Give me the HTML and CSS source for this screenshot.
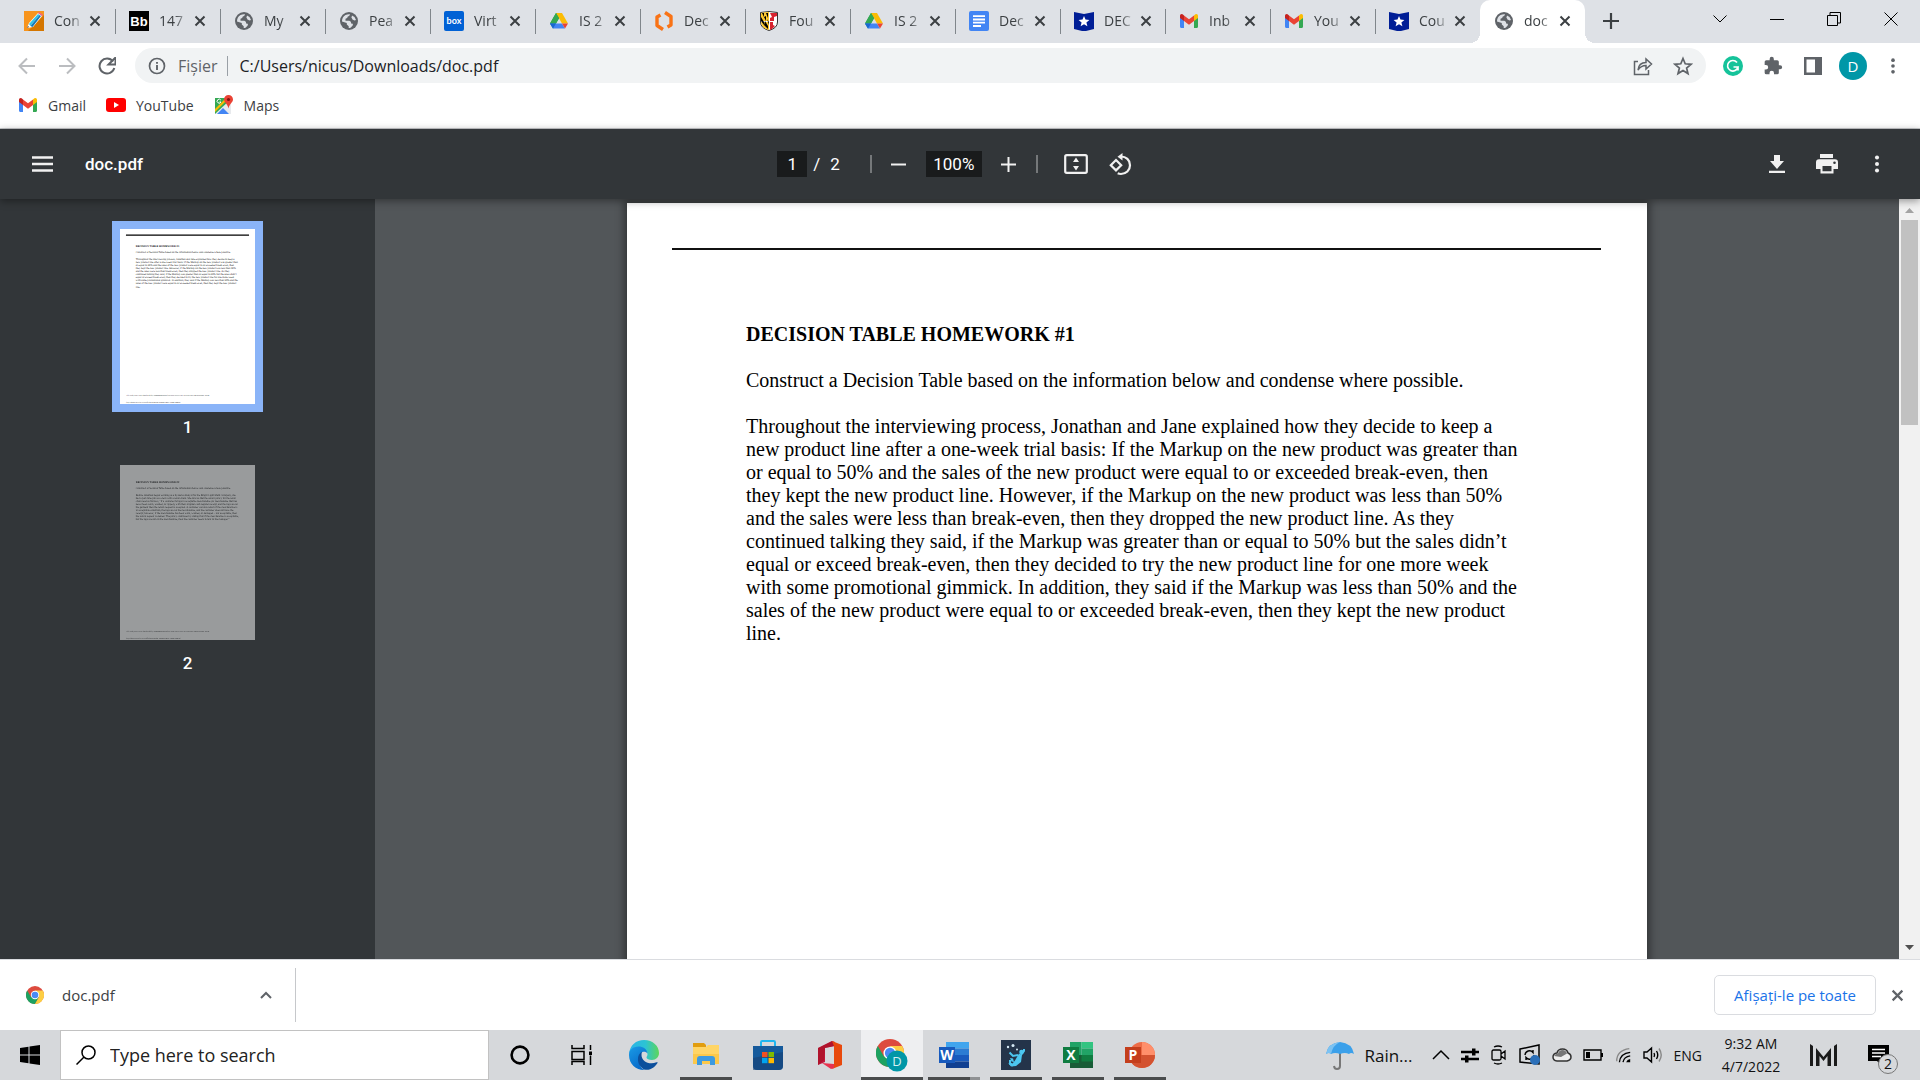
FILE: index.html
```html
<!DOCTYPE html>
<html lang="ro">
<head>
    <meta charset="UTF-8">
    <meta name="viewport" content="width=device-width, initial-scale=1.0">
    <title>doc.pdf</title>
    <link rel="stylesheet" href="styles.css">
</head>
<body>
    <!-- Shared icons -->
    <svg class="defs" aria-hidden="true">
        <symbol id="i-x" viewBox="0 0 12 12"><path d="M1.5 1.5l9 9M10.5 1.5l-9 9" fill="none" stroke="currentColor" stroke-width="2"/></symbol>
        <symbol id="i-globe" viewBox="0 0 20 20"><circle cx="10" cy="10" r="9" fill="#5f6368"/><path d="M3 10c0-2 1-4.500 3.500-6 1.500-.7 3-1 4.500-.8-.2 1.300-1 2-2.200 2.300-.3 1.500-1.300 2-2.300 2.300v1.900h3.800c1.500.4 1.800 1.500 1.800 2.700l1.600.4c.6 1-.1 2.200-1 2.800-.6 1-1.700 1.500-3 1.500v-1.800L7.800 13.500V12L3 10.500z" fill="#dee1e6"/><path d="M13 4.500l2.500 1.500 1.500 3-1.500.5-2-1-1-2z" fill="#dee1e6"/></symbol>
        <symbol id="i-drive" viewBox="0 0 20 20"><path d="M7 2h6l-3 5.200L4 17.500 1 12.400z" fill="#1ea446"/><path d="M7 2h6l6 10.400h-6z" fill="#fbbc04"/><path d="M7 2l3 5.200L7 12.400H1z" fill="#34a853"/><path d="M7 12.400h6l3 5.200H4l-3-5.200z" fill="#4285f4"/><path d="M4 17.600L1 12.400h6z" fill="#1967d2"/><path d="M13 12.400h6l-3 5.200z" fill="#ea4335"/></symbol>
        <symbol id="i-gmail" viewBox="0 0 20 20"><path d="M1 5v10.500c0 .8.500 1.500 1.500 1.500H5V8z" fill="#4285f4"/><path d="M19 5v10.500c0 .8-.5 1.500-1.500 1.500H15V8z" fill="#34a853"/><path d="M5 4.500v5.500L1 7V5c0-2 2-2.600 3.500-1z" fill="#c5221f"/><path d="M15 4.500v5.500l4-3V5c0-2-2-2.600-3.500-1z" fill="#fbbc04"/><path d="M5 4.500l5 3.700 5-3.700V10l-5 3.700L5 10z" fill="#ea4335"/></symbol>
        <symbol id="i-star-badge" viewBox="0 0 20 20"><path d="M0 1l10 2 10-2v17l-10 2.500L0 18z" fill="#001e96"/><path d="M10 5l1.500 3.600 3.900.3-3 2.500 1 3.800-3.400-2-3.400 2 1-3.800-3-2.500 3.900-.3z" fill="#fff"/></symbol>
        <symbol id="i-chrome" viewBox="0 0 24 24"><circle cx="12" cy="12" r="12" fill="#dd4b3e"/><path d="M1.600 6A12 12 0 0 0 12 24l5.200-9.100L6.800 14.900z" fill="#1da261"/><path d="M12 24A12 12 0 0 0 22.400 6H12l5.200 9z" fill="#fdce43"/><circle cx="12" cy="12" r="5.600" fill="#fff"/><circle cx="12" cy="12" r="4.400" fill="#4a8af4"/></symbol>
        <symbol id="i-dots" viewBox="0 0 24 24"><circle cx="12" cy="5" r="2.200"/><circle cx="12" cy="12" r="2.200"/><circle cx="12" cy="19" r="2.200"/></symbol>
    </svg>

    <header class="tab-strip">
        <nav class="tabs">
            <button class="tab">
                <svg class="fav" viewBox="0 0 20 20"><path d="M0 0h20v20H0z" fill="#f7941d"/><path d="M20 4v16H4z" fill="#d47600"/><path d="M3 17l2-5L14 2l4 3-9 11z" fill="#fff"/><path d="M5 13L14 3l1.500 1-9 11z" fill="#2fc3e8"/><path d="M6.500 15l9-11 1.500 1-8.500 11z" fill="#1579b8"/><path d="M3 17l1-2 1 1z" fill="#333"/><path d="M14 2l1-1 4 3-1 1z" fill="#ef6191"/></svg>
                <span>Con</span><svg class="close"><use href="#i-x"/></svg>
            </button>
            <button class="tab">
                <svg class="fav" viewBox="0 0 20 20"><path d="M0 0h20v20H0z"/><text x="10" y="15" text-anchor="middle" class="bb">Bb</text></svg>
                <span>147</span><svg class="close"><use href="#i-x"/></svg>
            </button>
            <button class="tab"><svg class="fav"><use href="#i-globe"/></svg><span>My</span><svg class="close"><use href="#i-x"/></svg></button>
            <button class="tab"><svg class="fav"><use href="#i-globe"/></svg><span>Pea</span><svg class="close"><use href="#i-x"/></svg></button>
            <button class="tab">
                <svg class="fav" viewBox="0 0 20 20"><rect width="20" height="20" rx="2" fill="#0061d5"/><text x="10" y="13" text-anchor="middle" class="box">box</text></svg>
                <span>Virt</span><svg class="close"><use href="#i-x"/></svg>
            </button>
            <button class="tab"><svg class="fav"><use href="#i-drive"/></svg><span>IS 2</span><svg class="close"><use href="#i-x"/></svg></button>
            <button class="tab">
                <svg class="fav" viewBox="0 0 20 20"><path d="M6.500 4L3 6v8.500L9 18.500M13.500 16l3.500-2V5.500L11 1.500" fill="none" stroke="#f97316" stroke-width="3.400" stroke-linejoin="round"/></svg>
                <span>Dec</span><svg class="close"><use href="#i-x"/></svg>
            </button>
            <button class="tab">
                <svg class="fav" viewBox="0 0 20 20"><path d="M1.500 1.500Q10-.5 18.500 1.500V11q0 6-8.500 8.500Q1.500 17 1.500 11z" fill="#fff" stroke="#333"/><path d="M2 2q4-1 8-1v9H2z" fill="#fdc82f"/><path d="M2 11h8v8q-8-2-8-8z" fill="#fdc82f"/><path d="M3 2l2 4V2zM5 6l2 4V5zM7 2l2 5V2zM2 6l3 5v3L2 10zM6 10l3 5v3l-4-4zM8 8l2 3v3z"/><path d="M11 2h7v3l-3 1v4h-4V7l2-1zM11 11h3v3l2 1-3 3-2 1z" fill="#d8232f"/></svg>
                <span>Fou</span><svg class="close"><use href="#i-x"/></svg>
            </button>
            <button class="tab"><svg class="fav"><use href="#i-drive"/></svg><span>IS 2</span><svg class="close"><use href="#i-x"/></svg></button>
            <button class="tab">
                <svg class="fav" viewBox="0 0 20 20"><rect width="20" height="20" rx="2" fill="#4285f4"/><path d="M4 5.200h12M4 8.500h12M4 11.700h12M4 15h8" stroke="#fff" stroke-width="1.800"/></svg>
                <span>Dec</span><svg class="close"><use href="#i-x"/></svg>
            </button>
            <button class="tab"><svg class="fav"><use href="#i-star-badge"/></svg><span>DEC</span><svg class="close"><use href="#i-x"/></svg></button>
            <button class="tab"><svg class="fav"><use href="#i-gmail"/></svg><span>Inb</span><svg class="close"><use href="#i-x"/></svg></button>
            <button class="tab"><svg class="fav"><use href="#i-gmail"/></svg><span>You</span><svg class="close"><use href="#i-x"/></svg></button>
            <button class="tab"><svg class="fav"><use href="#i-star-badge"/></svg><span>Cou</span><svg class="close"><use href="#i-x"/></svg></button>
            <button class="tab active"><svg class="fav"><use href="#i-globe"/></svg><span>doc</span><svg class="close"><use href="#i-x"/></svg></button>
        </nav>
        <button class="new-tab" aria-label="New tab"><svg width="16" height="16" viewBox="0 0 16 16"><path d="M8 0v16M0 8h16" stroke="#3c4043" stroke-width="2.200"/></svg></button>
        <div class="window-buttons">
            <button aria-label="Tabs"><svg width="14" height="14" viewBox="0 0 14 14"><path d="M.5 3.500L7 10l6.500-6.500"/></svg></button>
            <button aria-label="Minimize"><svg width="14" height="14" viewBox="0 0 14 14"><path d="M0 7.500h14"/></svg></button>
            <button aria-label="Restore"><svg width="14" height="14" viewBox="0 0 14 14"><path d="M.5 3.500h10v10H.5zM3 3.500v-3h10.500V11H10.500"/></svg></button>
            <button aria-label="Close"><svg width="14" height="14" viewBox="0 0 14 14"><path d="M.5.5l13 13M13.500.5l-13 13"/></svg></button>
        </div>
    </header>

    <div class="address-row">
        <button class="nav off" aria-label="Back"><svg width="18" height="18" viewBox="0 0 18 18"><path d="M17 9H2M9 1.500L1.500 9 9 16.500"/></svg></button>
        <button class="nav off" aria-label="Forward"><svg width="18" height="18" viewBox="0 0 18 18"><path d="M1 9h15M9 1.500L16.500 9 9 16.500"/></svg></button>
        <button class="nav" aria-label="Reload"><svg width="18" height="18" viewBox="0 0 18 18"><path d="M15 4.500A7.500 7.500 0 1 0 16.300 11"/><path d="M17.500.5v7h-7z" fill="#5f6368" stroke="none"/></svg></button>
        <div class="omnibox">
            <svg width="18" height="18" viewBox="0 0 18 18"><circle cx="9" cy="9" r="7.500" fill="none" stroke="#5f6368" stroke-width="1.700"/><path d="M9 8v5M9 5v1.800" stroke="#5f6368" stroke-width="1.900"/></svg>
            <label for="url">Fișier</label>
            <input id="url" type="text" value="C:/Users/nicus/Downloads/doc.pdf">
            <button aria-label="Share"><svg width="20" height="20" viewBox="0 0 20 20"><path d="M5 5.500H1.500v13h14V14M5 14c.5-5 3-7.500 8-7.500V3l5.500 5-5.500 5V9.500c-4 0-6 1.500-8 4.500z" fill="none" stroke="#5f6368" stroke-width="1.500"/></svg></button>
            <button aria-label="Bookmark"><svg width="20" height="20" viewBox="0 0 20 20"><path d="M10 2.500l2.200 5.300 5.800.5-4.400 3.700 1.400 5.600-5-3-5 3 1.400-5.600L2 8.300l5.800-.5z" fill="none" stroke="#5f6368" stroke-width="1.700"/></svg></button>
        </div>
        <div class="extensions">
            <button aria-label="Grammarly"><svg width="20" height="20" viewBox="0 0 20 20"><circle cx="10" cy="10" r="10" fill="#15c39a"/><path d="M14 6.500A5.300 5.300 0 1 0 15 11h-4.500M15 11v3.500" fill="none" stroke="#fff" stroke-width="1.700"/></svg></button>
            <button aria-label="Extensions"><svg width="20" height="20" viewBox="0 0 24 24"><path d="M20.500 11H19V7a2 2 0 0 0-2-2h-4V3.500a2.500 2.500 0 0 0-5 0V5H4a2 2 0 0 0-2 2v3.800h1.500a2.700 2.700 0 0 1 0 5.400H2V20a2 2 0 0 0 2 2h3.800v-1.500a2.700 2.700 0 0 1 5.400 0V22H17a2 2 0 0 0 2-2v-4h1.500a2.500 2.500 0 0 0 0-5z" fill="#5f6368"/></svg></button>
            <button aria-label="Side panel"><svg width="18" height="18" viewBox="0 0 18 18"><path d="M0 0h18v18H0zM2.500 2.500v13H11v-13z" fill="#5f6368" fill-rule="evenodd"/></svg></button>
            <button class="avatar" aria-label="Profile">D</button>
            <button aria-label="Menu"><svg width="20" height="20" fill="#5f6368"><use href="#i-dots"/></svg></button>
        </div>
    </div>

    <nav class="bookmarks">
        <a href="#"><svg width="20" height="20"><use href="#i-gmail"/></svg>Gmail</a>
        <a href="#"><svg width="20" height="20" viewBox="0 0 20 20"><rect y="3" width="20" height="14" rx="3" fill="#f00"/><path d="M8 7l5 3-5 3z" fill="#fff"/></svg>YouTube</a>
        <a href="#"><svg width="20" height="20" viewBox="0 0 20 20"><path d="M1 3h16v16H1z" fill="#34a853"/><path d="M1 19L17 4v15z" fill="#e8eaed"/><path d="M3 19l6-6 6 6z" fill="#4285f4"/><path d="M1 14L12 3h3L1 17z" fill="#fbbc04"/><path d="M6.800 5A2 2 0 1 0 7 7H5.500" fill="none" stroke="#fff"/><path d="M14.500 0a4.500 4.500 0 0 0-4.500 4.500c0 3 3.500 4 4.500 9 1-5 4.500-6 4.500-9A4.500 4.500 0 0 0 14.500 0z" fill="#ea4335"/><circle cx="14.500" cy="4.500" r="1.600" fill="#811411"/></svg>Maps</a>
    </nav>

    <div class="pdf-toolbar">
        <div class="pdf-left">
            <button aria-label="Menu"><svg width="21" height="16" viewBox="0 0 21 16"><path d="M0 1.500h21M0 8h21M0 14.500h21" stroke="#f1f1f1" stroke-width="2.500"/></svg></button>
            <span class="pdf-title">doc.pdf</span>
        </div>
        <div class="pdf-center">
            <input class="page-no" type="text" value="1" aria-label="Page">
            <span class="slash">/</span><span class="page-count">2</span>
            <i class="rule"></i>
            <button aria-label="Zoom out"><svg width="15" height="15" viewBox="0 0 15 15"><path d="M0 7.500h15" stroke="#f1f1f1" stroke-width="2"/></svg></button>
            <input class="zoom" type="text" value="100%" aria-label="Zoom">
            <button aria-label="Zoom in"><svg width="15" height="15" viewBox="0 0 15 15"><path d="M0 7.500h15M7.500 0v15" stroke="#f1f1f1" stroke-width="2"/></svg></button>
            <i class="rule"></i>
            <button class="fit" aria-label="Fit to page"><svg width="24" height="20" viewBox="0 0 24 20"><rect x="1.200" y="1.200" width="21.600" height="17.600" rx="1.500" fill="none" stroke="#f1f1f1" stroke-width="2.200"/><path d="M12 3.500L15 8H9zM12 16.500L15 12H9z" fill="#f1f1f1"/></svg></button>
            <button class="rotate" aria-label="Rotate"><svg width="23" height="23" viewBox="0 0 23 23"><path d="M7 7l5.200 5.200L7 17.400 1.800 12.200zM12 3.500c5 0 9 3.500 9 8.700s-4 8.800-9 8.800c-1.300 0-2.300-.2-3.300-.7" fill="none" stroke="#f1f1f1" stroke-width="2.200"/><path d="M13.500 0v7.500L8.500 3.700z" fill="#f1f1f1"/></svg></button>
        </div>
        <div class="pdf-right">
            <button aria-label="Download"><svg width="16" height="18" viewBox="0 0 16 18"><path d="M5 0h6v6h4l-7 8-7-8h4zM0 15.700h16V18H0z" fill="#f1f1f1"/></svg></button>
            <button aria-label="Print"><svg width="22" height="20" viewBox="0 0 22 20"><path d="M4 0h13v4H4zM3 5.200h16a3 3 0 0 1 3 3V15h-4.500v4.500h-13V15H0V8.200a3 3 0 0 1 3-3zM6.500 12v5.300h9V12zM18.500 7.500a1.300 1.300 0 1 0 0 2.600 1.300 1.300 0 0 0 0-2.600z" fill="#f1f1f1" fill-rule="evenodd"/></svg></button>
            <button aria-label="More"><svg width="22" height="22" fill="#f1f1f1"><use href="#i-dots"/></svg></button>
        </div>
    </div>

    <main class="viewer">
        <aside class="thumbs">
            <button class="thumb selected">
                <svg class="sheet" viewBox="0 0 1020 1322">
                    <path d="M45 46h930" stroke="#000" stroke-width="9"/>
                    <text x="119" y="137" font-weight="bold">DECISION TABLE HOMEWORK #1</text>
                    <text x="119" y="183">Construct a Decision Table based on the information below and condense where possible.</text>
                    <text>
                        <tspan x="119" y="235">Throughout the interviewing process, Jonathan and Jane explained how they decide to keep a</tspan>
                        <tspan x="119" dy="23">new product line after a one-week trial basis: If the Markup on the new product was greater than</tspan>
                        <tspan x="119" dy="23">or equal to 50% and the sales of the new product were equal to or exceeded break-even, then</tspan>
                        <tspan x="119" dy="23">they kept the new product line. However, if the Markup on the new product was less than 50%</tspan>
                        <tspan x="119" dy="23">and the sales were less than break-even, then they dropped the new product line. As they</tspan>
                        <tspan x="119" dy="23">continued talking they said, if the Markup was greater than or equal to 50% but the sales didn’t</tspan>
                        <tspan x="119" dy="23">equal or exceed break-even, then they decided to try the new product line for one more week</tspan>
                        <tspan x="119" dy="23">with some promotional gimmick. In addition, they said if the Markup was less than 50% and the</tspan>
                        <tspan x="119" dy="23">sales of the new product were equal to or exceeded break-even, then they kept the new product</tspan>
                        <tspan x="119" dy="23">line.</tspan>
                    </text>
                    <text class="foot" x="48" y="1262">This study source was downloaded by 100000838297040 from CourseHero.com on 04-07-2022 08:30:50 GMT -05:00</text>
                    <text class="foot" x="48" y="1315">https://www.coursehero.com/file/30750267/DECISION-TABLE-HOMEWORK/</text>
                </svg>
            </button>
            <span class="thumb-no">1</span>
            <button class="thumb dim">
                <svg class="sheet" viewBox="0 0 1020 1322">
                    <text x="119" y="137" font-weight="bold">DECISION TABLE HOMEWORK #2</text>
                    <text x="119" y="183">Construct a Decision Table based on the information below and condense where possible.</text>
                    <text>
                        <tspan x="119" y="235">Before Jonathan began working as a Systems Analyst for the Bright Light Math Company, she</tspan>
                        <tspan x="119" dy="23">had a part-time job as a clerk with a retail chain. She told us that the return policy for the retail</tspan>
                        <tspan x="119" dy="23">chain read as follows, “If a customer brings in acceptable merchandise (or merchandise that has</tspan>
                        <tspan x="119" dy="23">never been worn, washed, or ripped), with their original cash register receipt, and the tags are on</tspan>
                        <tspan x="119" dy="23">the garment then the return request is accepted. A customer can also return if the merchandise is</tspan>
                        <tspan x="119" dy="23">in acceptable condition, the tags are on the merchandise, and the customer does not have the</tspan>
                        <tspan x="119" dy="23">receipt; however, if the merchandise has been worn, washed, or damaged – not acceptable, then</tspan>
                        <tspan x="119" dy="23">the return request is denied. The policy continues by stating that if the merchandise is acceptable,</tspan>
                        <tspan x="119" dy="23">but the tags are not on the merchandise, then the customer needs to talk to the manager.”</tspan>
                    </text>
                    <text class="foot" x="48" y="1262">This study source was downloaded by 100000838297040 from CourseHero.com on 04-07-2022 08:30:50 GMT -05:00</text>
                    <text class="foot" x="48" y="1315">https://www.coursehero.com/file/30750267/DECISION-TABLE-HOMEWORK/</text>
                </svg>
            </button>
            <span class="thumb-no">2</span>
        </aside>
        <section class="pages">
            <article class="page">
                <hr>
                <h1>DECISION TABLE HOMEWORK #1</h1>
                <p>Construct a Decision Table based on the information below and condense where possible.</p>
                <p>Throughout the interviewing process, Jonathan and Jane explained how they decide to keep a new product line after a one-week trial basis: If the Markup on the new product was greater than or equal to 50% and the sales of the new product were equal to or exceeded break-even, then they kept the new product line. However, if the Markup on the new product was less than 50% and the sales were less than break-even, then they dropped the new product line. As they continued talking they said, if the Markup was greater than or equal to 50% but the sales didn’t equal or exceed break-even, then they decided to try the new product line for one more week with some promotional gimmick. In addition, they said if the Markup was less than 50% and the sales of the new product were equal to or exceeded break-even, then they kept the new product line.</p>
            </article>
        </section>
        <div class="scrollbar">
            <svg width="21" height="21" viewBox="0 0 21 21"><path d="M6 14l4.500-5 4.500 5z" fill="#a3a3a3"/></svg>
            <div class="scroll-handle"></div>
            <svg class="down" width="21" height="21" viewBox="0 0 21 21"><path d="M6 7l4.500 5L15 7z" fill="#505050"/></svg>
        </div>
    </main>

    <div class="downloads">
        <div class="download">
            <svg width="18" height="18"><use href="#i-chrome"/></svg>
            <span>doc.pdf</span>
            <button aria-label="Options"><svg width="12" height="8" viewBox="0 0 12 8"><path d="M1 7l5-5 5 5" fill="none" stroke="#5f6368" stroke-width="2"/></svg></button>
        </div>
        <button class="show-all">Afișați-le pe toate</button>
        <button class="dismiss" aria-label="Close"><svg width="13" height="13"><use href="#i-x"/></svg></button>
    </div>

    <footer class="taskbar">
        <button class="start" aria-label="Start"><svg width="20" height="20" viewBox="0 0 20 20"><path d="M0 3l8.500-1.300v7.800H0zM9.500 1.500L20 0v9.500H9.500zM0 10.500h8.500v7.800L0 17zM9.500 10.500H20V20L9.500 18.500z"/></svg></button>
        <div class="search">
            <label for="search" aria-label="Search"><svg width="20" height="20" viewBox="0 0 20 20"><circle cx="12.500" cy="7.500" r="6.500" fill="none" stroke="#000" stroke-width="1.500"/><path d="M8 12L.5 19.500" stroke="#000" stroke-width="1.500"/></svg></label>
            <input id="search" type="text" placeholder="Type here to search">
        </div>
        <div class="apps">
            <button aria-label="Cortana"><svg width="20" height="20" viewBox="0 0 20 20"><circle cx="10" cy="10" r="8.400" fill="none" stroke="#000" stroke-width="2.600"/></svg></button>
            <button aria-label="Task view"><svg width="22" height="20" viewBox="0 0 22 20"><path d="M1 0v3.500h12V0M1 6.500h12v8H1zM1 20v-3.500h12V20M19.500 0v5M19.500 10.500V20" fill="none" stroke="#000" stroke-width="1.500"/><path d="M18 6.500h3V10h-3z"/></svg></button>
            <button aria-label="Edge"><svg width="30" height="30" viewBox="0 0 30 30">
                <defs><linearGradient id="eg1" x1="0" x2="1"><stop stop-color="#2bb3e8"/><stop offset=".55" stop-color="#2cc3d4"/><stop offset="1" stop-color="#5ed65a"/></linearGradient><linearGradient id="eg2" x1="0" y1="0" x2=".6" y2="1"><stop stop-color="#1a9be6"/><stop offset="1" stop-color="#0768c8"/></linearGradient></defs>
                <path d="M0 14C1 5 7 0 15 0c9 0 15 6 15 13 0 4-3 7-7 7-3 0-5.500-1-5.500-2.500 0-1 1-1.500 1-3.500C18 10 14 8 10 8 5 8 1.500 11 0 14z" fill="url(#eg1)"/>
                <path d="M0 15c0-5 4-8.500 9.500-8.500 4.500 0 8.500 2.500 9 7-1-1.500-3-2-5-1.500C9 13.500 9 30 17 30h-2C7 30 0 24 0 15z" fill="url(#eg2)"/>
                <path d="M13 11.500c-6 3.500-5.500 14 2.500 18C21 31 26 27 28.500 23c.4-.8-.2-1-1-.7C20 25.500 12.500 21 12.500 15c0-1.500.2-2.500.5-3.500z" fill="#0c4f9c"/></svg></button>
            <button class="open" aria-label="Explorer"><svg width="28" height="26" viewBox="0 0 28 26"><path d="M1 1h11l2 2v4H1z" fill="#e19d0f"/><path d="M1 5h13l2-2h11v19H1z" fill="#ffd566"/><path d="M1 12h26v10H1z" fill="#fcc84a"/><path d="M5 23v-6q0-3 3-3h12q3 0 3 3v6h-5v-4h-8v4z" fill="#3d9ae0"/></svg></button>
            <button aria-label="Store"><svg width="30" height="30" viewBox="0 0 30 30"><path d="M8 6V2.200Q8 1 9.200 1h11.600Q22 1 22 2.200V6" fill="none" stroke="#1fb6f0" stroke-width="2"/><path d="M0 6h30v20q0 4-4 4H4q-4 0-4-4z" fill="#155a9c"/><path d="M0 30V18l30-6v14q0 4-4 4z" fill="#183e70" opacity=".55"/><path d="M9 12h5.500v5.200H9z" fill="#f25022"/><path d="M15.500 12H21v5.200h-5.500z" fill="#7fba00"/><path d="M9 18h5.500v5.200H9z" fill="#00a4ef"/><path d="M15.500 18H21v5.200h-5.500z" fill="#ffb900"/></svg></button>
            <button aria-label="Office"><svg width="24" height="30" viewBox="0 0 24 30"><path d="M0 8L14 1l3 1v4L7 8v14l-7 3z" fill="#c4163c"/><path d="M0 8L14 1l2 5-9 2-1 12-6 5z" fill="#a41221" opacity=".6"/><path d="M14 1l10 4v20l-10 4 2-5V6z" fill="#e8490c"/><path d="M4 23l12 1v4l-3 1z" fill="#e8324e"/></svg></button>
            <button class="open current" aria-label="Chrome"><svg width="32" height="34" viewBox="0 0 32 34"><svg width="28" height="28" y="1"><use href="#i-chrome"/></svg><circle cx="21" cy="23" r="10.500" fill="#0097a7"/><text x="21" y="28" text-anchor="middle" class="badge-d">D</text></svg></button>
            <button class="open many" aria-label="Word"><svg width="30" height="28" viewBox="0 0 30 28"><path d="M7 1h23v6.500H7z" fill="#41a5ee"/><path d="M7 7.500h23V14H7z" fill="#2b7cd3"/><path d="M7 14h23v6.500H7z" fill="#185abd"/><path d="M7 20.500h23V27H7z" fill="#103f91"/><path d="M0 6h16v16H0z" fill="#185abd"/><text x="8" y="19" text-anchor="middle" class="tile">W</text></svg></button>
            <button class="open" aria-label="Volleyball"><svg width="30" height="30" viewBox="0 0 30 30"><path d="M0 0h30v30H0z" fill="#24344a"/><path d="M18 13.500l3 1.500-1 7-5 4-5 .5-2.500-3 1-1.500 3 1.500 2.500-3zM9 18l3 .5 1 3.500-2.500-.5z" fill="#4cc6f0"/><path d="M17 15l-5 1-3.500-3.500M20 15l3-4V9M9 20v4l3 1.500" fill="none" stroke="#4cc6f0" stroke-width="2"/><circle cx="20.500" cy="12" r="2.300" fill="#4cc6f0"/><circle cx="7" cy="7" r="1.200" fill="#d5e9f5"/><circle cx="12" cy="5.500" r="1.500" fill="#d5e9f5"/><circle cx="16" cy="9.500" r="1" fill="#d5e9f5"/></svg></button>
            <button class="open" aria-label="Excel"><svg width="30" height="28" viewBox="0 0 30 28"><path d="M7 1h11.500v13H7z" fill="#21a366"/><path d="M18.500 1H30v6.500H18.500z" fill="#33c481"/><path d="M18.500 7.500H30V14H18.500z" fill="#21a366"/><path d="M7 14h23v13H7z" fill="#185c37"/><path d="M18.500 14H30v6.500H18.500z" fill="#107c41"/><path d="M0 6h16v16H0z" fill="#107c41"/><text x="8" y="19" text-anchor="middle" class="tile">X</text></svg></button>
            <button class="open" aria-label="PowerPoint"><svg width="30" height="28" viewBox="0 0 30 28"><circle cx="17" cy="14" r="13" fill="#ed6c47"/><path d="M17 1a13 13 0 0 1 13 13H17z" fill="#ff8f6b"/><path d="M4 14h26a13 13 0 0 1-26 0z" fill="#d35230"/><path d="M0 6h16v16H0z" fill="#c43e1c"/><text x="8" y="19" text-anchor="middle" class="tile">P</text></svg></button>
        </div>
        <div class="tray">
            <button class="weather"><svg width="28" height="30" viewBox="0 0 28 30"><path d="M14 12v14q0 3-3 3-2.500 0-3-3" fill="none" stroke="#777" stroke-width="2"/><path d="M0 14Q2 3 14 2q12 1 14 12-3-2-5 0-4-2-9 0-5-2-9 0-2-2-5 0z" fill="#3ba0ea"/><path d="M0 14Q2 3 14 2 7 5 5 14q-2-2-5 0z" fill="#7cc2f2"/></svg>Rain...</button>
            <svg width="18" height="20" viewBox="0 0 18 20"><path d="M1 14l8-8 8 8" fill="none" stroke="#000" stroke-width="1.500"/></svg>
            <svg width="18" height="20" viewBox="0 0 18 20"><path d="M0 7h18M0 14h18" stroke="#000" stroke-width="2.500"/><path d="M11 3.500h3.500v7H11zM4 10.500h3.500v7H4z"/></svg>
            <svg width="18" height="20" viewBox="0 0 18 20"><path d="M4 2q4-2 8 0M4 18q4 2 8 0M2 6.500Q2 5 3.500 5h6Q11 5 11 6.500v7q0 1.500-1.500 1.500h-6Q2 15 2 13.500zM11 9l4-3v8l-4-3" fill="none" stroke="#000" stroke-width="1.300"/></svg>
            <svg width="22" height="22" viewBox="0 0 22 22"><path d="M1 5l19-4v19L1 18z" fill="none" stroke="#000" stroke-width="1.500"/><path d="M6 11a4.500 4.500 0 0 1 8-2.500V6M15 11a4.500 4.500 0 0 1-8 2.500V16" fill="none" stroke="#000" stroke-width="1.400"/><circle cx="16" cy="16" r="5" fill="#2b6fb8"/></svg>
            <svg width="20" height="20" viewBox="0 0 20 20"><path d="M5 16q-4-.5-4-4t4-4q1-4 5.500-4T16 8q3 1 3 4t-4 4z" fill="#eee" stroke="#333" stroke-width="1.500"/><path d="M2 11q1-2.500 4-2.500Q7 5 10.500 5T15 8.500L9 12z" fill="#777"/></svg>
            <svg width="20" height="20" viewBox="0 0 20 20"><path d="M1 5h17v10H1z" fill="none" stroke="#000" stroke-width="1.400"/><path d="M3 7h4v6H3zM18 8h2v4h-2z"/></svg>
            <svg width="18" height="20" viewBox="0 0 20 20"><path d="M3 17Q3 5 17 3" fill="none" stroke="#888" stroke-width="1.500"/><path d="M6 18Q7 8 18 7M10 18q1-6 8-7" fill="none" stroke="#000" stroke-width="1.500"/><path d="M13.500 18q1-3 4.500-3.500V18z"/></svg>
            <svg width="20" height="20" viewBox="0 0 20 20"><path d="M1 7h3l4.500-4v14L4 13H1zM11 8q1.200 2 0 4M13.500 6q2.500 4 0 8" fill="none" stroke="#000" stroke-width="1.400"/><path d="M16 3.500q4.500 6.500 0 13" fill="none" stroke="#888" stroke-width="1.400"/></svg>
            <span class="lang">ENG</span>
            <span class="clock">9:32 AM<br>4/7/2022</span>
            <svg class="malware" width="27" height="22" viewBox="0 0 27 22"><path d="M0 0l3 2v20H0zM27 0l-3 2v20h3zM6 4l7.500 9L21 4v18h-3.500V12l-4 5-4-5v10H6z" fill="#1a1a1a"/></svg>
            <button class="notes" aria-label="Notifications"><svg width="21" height="20" viewBox="0 0 21 20"><path d="M0 0h21v16h-8v4l-4-4H0z"/><path d="M4 4.500h13M4 8h13M4 11.500h9" stroke="#fff" stroke-width="1.500"/></svg><span>2</span></button>
        </div>
    </footer>
</body>
</html>
```
FILE: styles.css
```css
* {
    box-sizing: border-box;
}
html, body {
    height: 100%;
}
body {
    margin: 0;
    display: flex;
    flex-direction: column;
    overflow: hidden;
    background: #fff;
    font-family: "Open Sans", "Noto Sans", sans-serif;
    font-size: 15px;
    color: #3c4043;
}
button {
    border: 0;
    padding: 0;
    background: none;
    font: inherit;
    color: inherit;
    display: flex;
    align-items: center;
    justify-content: center;
    flex: none;
}
input {
    border: 0;
    padding: 0;
    min-width: 0;
    background: none;
    font: inherit;
    color: inherit;
    outline: none;
}
svg {
    flex: none;
    display: block;
}
.defs {
    position: absolute;
    width: 0;
    height: 0;
}

/* Tabs */
.tab-strip {
    display: flex;
    flex: none;
    height: 43px;
    padding-left: 10px;
    background: #dee1e6;
}
.tabs {
    display: flex;
}
.tab {
    position: relative;
    width: 105px;
    padding: 0 14px 2px;
    justify-content: flex-start;
    font-size: 14px;
}
.tab::after {
    content: "";
    position: absolute;
    right: -1px;
    top: 9px;
    width: 1px;
    height: 25px;
    background: #80868b;
}
.tab:nth-last-child(2)::after {
    display: none;
}
.tab.active {
    background: #fff;
    border-radius: 10px 10px 0 0;
}
.tab.active::before,
.tab.active::after {
    content: "";
    position: absolute;
    top: auto;
    bottom: 0;
    width: 10px;
    height: 10px;
}
.tab.active::before {
    left: -10px;
    background: radial-gradient(circle at 0 0, #dee1e6 10px, #fff 10px);
}
.tab.active::after {
    right: -10px;
    background: radial-gradient(circle at 100% 0, #dee1e6 10px, #fff 10px);
}
.fav {
    width: 20px;
    height: 20px;
}
.tab span {
    width: 28px;
    margin: 0 9px 0 10px;
    white-space: nowrap;
    text-align: left;
    -webkit-mask-image: linear-gradient(to right, #000 60%, rgba(0, 0, 0, 0.3));
    mask-image: linear-gradient(to right, #000 60%, rgba(0, 0, 0, 0.3));
}
.close {
    width: 12px;
    height: 12px;
}
.bb {
    font: bold 13px "Liberation Sans", sans-serif;
    fill: #fff;
}
.box {
    font: bold 9px Lato, sans-serif;
    fill: #fff;
}
.new-tab {
    width: 52px;
    padding-bottom: 1px;
}
.window-buttons {
    display: flex;
    height: 38px;
    margin: 0 1px 0 auto;
}
.window-buttons button {
    width: 57px;
}
.window-buttons path {
    fill: none;
    stroke: #000;
}

/* Address bar */
.address-row {
    display: flex;
    flex: none;
    align-items: center;
    height: 45px;
    padding: 0 7px;
}
.nav {
    width: 40px;
}
.nav path {
    fill: none;
    stroke: #5f6368;
    stroke-width: 2;
}
.nav.off path {
    stroke: #bbbdc0;
}
.omnibox {
    display: flex;
    flex: 1;
    align-items: center;
    height: 35px;
    margin-left: 8px;
    padding: 0 3px 0 13px;
    border-radius: 18px;
    background: #f1f3f4;
    font-size: 16px;
}
.omnibox label {
    margin-left: 12px;
    padding-right: 10px;
    border-right: 1px solid #9aa0a6;
    line-height: 20px;
    color: #5f6368;
}
.omnibox input {
    flex: 1;
    margin-left: 11px;
    color: #202124;
}
.omnibox button,
.extensions button {
    width: 40px;
}
.extensions {
    display: flex;
    align-items: center;
    margin-left: 7px;
}
.extensions .avatar {
    width: 28px;
    height: 28px;
    margin: 0 6px;
    border-radius: 50%;
    background: #0097a7;
    color: #fff;
}
.bookmarks {
    display: flex;
    flex: none;
    align-items: center;
    gap: 20px;
    height: 41px;
    padding: 0 18px 6px;
    border-bottom: 1px solid #c8cacd;
    font-size: 14px;
}
.bookmarks a {
    display: flex;
    align-items: center;
    gap: 10px;
    color: inherit;
    text-decoration: none;
}

/* PDF viewer */
.pdf-toolbar {
    display: flex;
    flex: none;
    position: relative;
    align-items: center;
    height: 70px;
    background: #323639;
    box-shadow: 0 2px 8px rgba(0, 0, 0, 0.4);
    color: #fff;
    font-family: Roboto, sans-serif;
    font-size: 17px;
}
.pdf-left,
.pdf-right {
    display: flex;
    flex: 1;
    align-items: center;
}
.pdf-left {
    padding-left: 32px;
}
.pdf-title {
    margin-left: 32px;
    font-weight: 500;
}
.pdf-center {
    display: flex;
    align-items: center;
    padding-right: 18px;
}
.page-no,
.zoom {
    height: 26px;
    background: #191b1c;
    text-align: center;
}
.page-no {
    width: 30px;
}
.zoom {
    width: 56px;
}
.slash {
    margin: 0 10px 0 6px;
}
.rule {
    width: 2px;
    height: 18px;
    background: #75787a;
}
.page-count {
    margin-right: 30px;
}
.pdf-center button {
    width: 54px;
}
.pdf-center .fit {
    margin-left: 11px;
}
.pdf-center .rotate {
    width: 36px;
}
.pdf-right {
    justify-content: flex-end;
    padding-right: 18px;
}
.pdf-right button {
    width: 50px;
}
.viewer {
    display: flex;
    flex: 1;
    min-height: 0;
    background: #525659;
}
.thumbs {
    display: flex;
    flex: none;
    flex-direction: column;
    align-items: center;
    width: 375px;
    padding-top: 22px;
    background: #323639;
}
.thumb {
    border: 8px solid transparent;
}
.thumb.selected {
    border-color: #8ab4f8;
}
.thumb.dim {
    margin-top: 18px;
    opacity: 0.5;
}
.sheet {
    width: 135px;
    height: 175px;
    background: #fff;
    font-family: "Liberation Serif", serif;
    font-size: 20px;
    text-rendering: geometricPrecision;
}
.sheet .foot {
    font-family: "Liberation Sans", sans-serif;
    font-size: 12px;
}
.thumb-no {
    margin-top: 3px;
    color: #fff;
    font: 500 17px/24px Roboto, sans-serif;
}
.pages {
    flex: 1;
    padding-top: 4px;
    overflow: hidden;
}
.page {
    width: 1020px;
    height: 1320px;
    margin: 0 auto;
    padding: 45px 46px 0 45px;
    background: #fff;
    box-shadow: 0 0 8px 3px rgba(0, 0, 0, 0.4);
    color: #000;
    font: 20px/23px "Liberation Serif", serif;
}
.page hr {
    height: 2px;
    margin: 0 0 73px;
    border: 0;
    background: #111;
}
.page h1,
.page p {
    margin: 0 76px 23px 74px;
    font-size: 20px;
}
.scrollbar {
    display: flex;
    flex: none;
    flex-direction: column;
    width: 21px;
    background: #f1f1f1;
}
.scroll-handle {
    height: 205px;
    margin: 0 2px;
    background: #c1c1c1;
}
.scrollbar .down {
    margin-top: auto;
}

/* Downloads */
.downloads {
    display: flex;
    flex: none;
    align-items: center;
    height: 71px;
    padding-right: 16px;
    border-top: 1px solid #dadce0;
}
.download {
    display: flex;
    align-items: center;
    width: 296px;
    height: 54px;
    padding: 0 23px 0 26px;
    border-right: 1px solid #c6c8cb;
}
.download span {
    flex: 1;
    margin-left: 18px;
}
.show-all {
    width: 162px;
    height: 40px;
    margin-left: auto;
    border: 1px solid #dadce0;
    border-radius: 5px;
    color: #1a73e8;
    font-weight: 500;
}
.dismiss {
    margin-left: 15px;
    color: #5f6368;
}

/* Taskbar */
.taskbar {
    display: flex;
    flex: none;
    height: 50px;
    background: #d6d8db;
    color: #111;
}
.start {
    width: 60px;
}
.search {
    display: flex;
    align-items: center;
    width: 429px;
    padding-left: 15px;
    border: 1px solid #c2c2c2;
    background: #fff;
}
.search input {
    flex: 1;
    margin-left: 14px;
    font-size: 18px;
}
.search input::placeholder {
    color: #222;
    opacity: 1;
}
.apps {
    display: flex;
}
.apps button {
    position: relative;
    width: 62px;
}
.apps .open::after {
    content: "";
    position: absolute;
    bottom: 0;
    left: 5px;
    right: 5px;
    height: 3px;
    background: #4a4c4d;
}
.apps .current {
    background: #eeeff1;
}
.apps .current::after {
    left: 0;
    right: 0;
}
.apps .many::after {
    background: linear-gradient(to right, #4a4c4d 80%, #8f9193 80%);
}
.badge-d {
    font: 13px "Open Sans", sans-serif;
    fill: #d5eff2;
}
.tile {
    font: bold 14px "Open Sans", sans-serif;
    fill: #fff;
}
.tray {
    display: flex;
    align-items: center;
    gap: 11px;
    margin-left: auto;
    padding-right: 22px;
}
.weather {
    gap: 10px;
    margin-right: 8px;
    font-size: 17px;
}
.clock {
    width: 76px;
    font-size: 14px;
    line-height: 23px;
    text-align: center;
}
.lang {
    font-size: 14px;
}
.malware {
    margin: 0 20px 0 10px;
}
.notes {
    position: relative;
    width: 30px;
    justify-content: flex-start;
}
.notes span {
    position: absolute;
    left: 10px;
    top: 9px;
    width: 20px;
    height: 20px;
    border: 1px solid #777;
    border-radius: 50%;
    background: #d6d8db;
    font-size: 14px;
    line-height: 18px;
}
```
